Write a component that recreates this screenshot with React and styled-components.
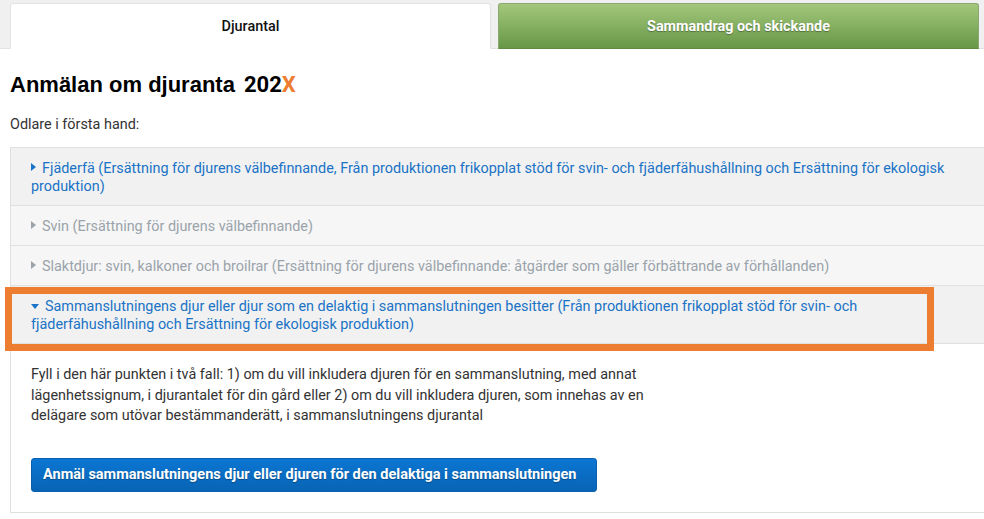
import React from 'react';
import styled, { createGlobalStyle } from 'styled-components';

const GlobalStyle = createGlobalStyle`
    body {
        margin: 0;
        background: #ffffff;
        font-family: Roboto, "Liberation Sans", sans-serif;
        color: #333333;
    }
`;

const Page = styled.div`
    width: 984px;
    overflow: hidden;
`;

const TabBar = styled.div`
    display: flex;
    gap: 7px;
    padding: 3px 5px 0 10px;
    background: #f0f0f0;
    border-bottom: 1px solid #e2e2e2;
`;

const Tab = styled.div`
    flex: 1;
    height: 44px;
    display: flex;
    align-items: center;
    justify-content: center;
    font-size: 14.4px;
    border-radius: 3px 3px 0 0;
    margin-bottom: -1px;
    background: ${p => (p.$active ? '#ffffff' : 'linear-gradient(#a3c77b, #679747)')};
    color: ${p => (p.$active ? '#111111' : '#ffffff')};
    font-weight: ${p => (p.$active ? 500 : 700)};
    border: 1px solid ${p => (p.$active ? '#e2e2e2' : '#8aa872')};
    border-bottom: ${p => (p.$active ? '1px solid #ffffff' : '1px solid #5f8c40')};
    text-shadow: ${p => (p.$active ? 'none' : '0 1px 1px rgba(0,0,0,0.35)')};
`;

const Main = styled.div`
    padding-left: 10px;
`;

const Title = styled.h1`
    margin: 22px 0 0;
    font-family: "Liberation Sans", Arial, sans-serif;
    font-size: 22px;
    font-weight: 700;
    line-height: 28px;
    color: #000000;
`;

const Year = styled.span`
    margin-left: 9px;
    font-family: Roboto, sans-serif;
`;

const Accent = styled.span`
    color: #ed7d31;
`;

const Lead = styled.p`
    margin: 16px 0 0;
    font-size: 14.4px;
    line-height: 20px;
`;

const Accordion = styled.div`
    margin-top: 12px;
    border-left: 1px solid #e0e0e0;
    border-top: 1px solid #e0e0e0;
`;

const Item = styled.div`
    position: relative;
    padding: 12px 20px 9px 20px;
    font-size: 14.4px;
    line-height: 18px;
    background: ${p => (p.$muted ? '#f6f6f6' : '#f1f1f1')};
    color: ${p => (p.$muted ? '#9aa3ab' : '#1a73c6')};
    border-bottom: 1px solid #e0e0e0;
`;

const Caret = styled.span`
    display: inline-block;
    width: 0;
    height: 0;
    margin-right: 6px;
    vertical-align: 2px;
    ${p =>
        p.$open
            ? `border-left: 4px solid transparent;
               border-right: 4px solid transparent;
               border-top: 5px solid currentColor;`
            : `border-top: 4px solid transparent;
               border-bottom: 4px solid transparent;
               border-left: 5px solid currentColor;`}
`;

const Highlight = styled.div`
    position: absolute;
    top: 1px;
    left: -6px;
    width: 929px;
    height: 64px;
    box-sizing: border-box;
    border: 7px solid #ed7d31;
    pointer-events: none;
`;

const Panel = styled.div`
    padding: 21px 20px 20px;
    border-bottom: 1px solid #e0e0e0;
`;

const PanelText = styled.p`
    margin: 0;
    max-width: 632px;
    font-size: 14.4px;
    line-height: 20.5px;
    color: #333333;
`;

const Button = styled.button`
    display: block;
    margin-top: 31px;
    height: 34px;
    padding: 0 20px 0 11px;
    border: 1px solid #0a5fae;
    border-radius: 3px;
    background: linear-gradient(#0b76d3, #0864b4);
    color: #ffffff;
    font-family: Roboto, sans-serif;
    font-size: 14.5px;
    font-weight: 700;
    text-shadow: 0 1px 1px rgba(0,0,0,0.3);
    cursor: pointer;
`;

const items = [
    {
        text: 'Fjäderfä (Ersättning för djurens välbefinnande, Från produktionen frikopplat stöd för svin- och fjäderfähushållning och Ersättning för ekologisk produktion)',
    },
    { text: 'Svin (Ersättning för djurens välbefinnande)', muted: true },
    {
        text: 'Slaktdjur: svin, kalkoner och broilrar (Ersättning för djurens välbefinnande: åtgärder som gäller förbättrande av förhållanden)',
        muted: true,
    },
];

export default function App() {
    return (
        <Page>
            <GlobalStyle />
            <TabBar>
                <Tab $active>Djurantal</Tab>
                <Tab>Sammandrag och skickande</Tab>
            </TabBar>
            <Main>
                <Title>
                    Anmälan om djuranta<Year>202<Accent>X</Accent></Year>
                </Title>
                <Lead>Odlare i första hand:</Lead>
                <Accordion>
                    {items.map(item => (
                        <Item key={item.text} $muted={item.muted}>
                            <Caret />
                            {item.text}
                        </Item>
                    ))}
                    <Item>
                        <Caret $open />
                        Sammanslutningens djur eller djur som en delaktig i sammanslutningen besitter (Från produktionen frikopplat stöd för svin- och fjäderfähushållning och Ersättning för ekologisk produktion)
                        <Highlight />
                    </Item>
                    <Panel>
                        <PanelText>
                            Fyll i den här punkten i två fall: 1) om du vill inkludera djuren för en sammanslutning, med annat lägenhetssignum, i djurantalet för din gård eller 2) om du vill inkludera djuren, som innehas av en delägare som utövar bestämmanderätt, i sammanslutningens djurantal
                        </PanelText>
                        <Button>Anmäl sammanslutningens djur eller djuren för den delaktiga i sammanslutningen</Button>
                    </Panel>
                </Accordion>
            </Main>
        </Page>
    );
}
